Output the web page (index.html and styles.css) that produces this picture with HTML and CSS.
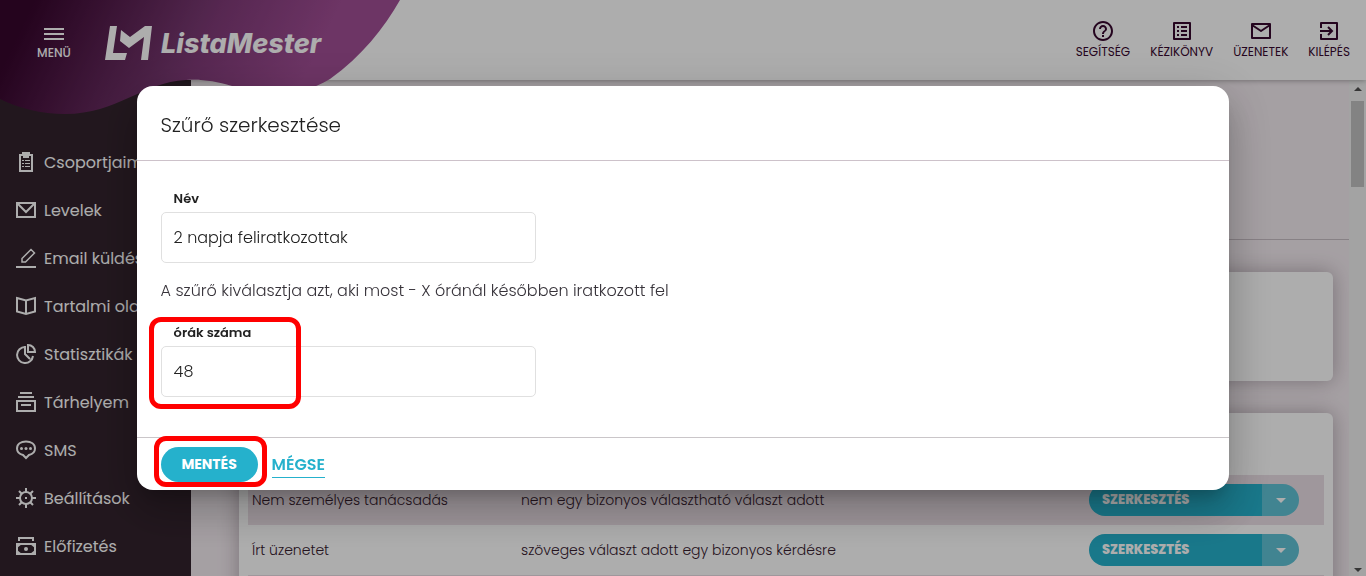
FILE: index.html
```html
<!DOCTYPE html>
<html lang="hu">
<head>
    <meta charset="UTF-8">
    <meta name="viewport" content="width=device-width, initial-scale=1.0">
    <title>ListaMester</title>
    <link rel="stylesheet" href="styles.css">
</head>
<body>
    <div class="app">
        <header class="topbar">
            <!-- Purple wave behind the logo -->
            <svg class="wave" width="400" height="115" viewBox="0 0 400 115" aria-hidden="true">
                <defs>
                    <linearGradient id="waveFill" gradientUnits="userSpaceOnUse" x1="30" y1="10" x2="280" y2="130">
                        <stop offset="0" stop-color="#37062d"/>
                        <stop offset="0.55" stop-color="#773770"/>
                        <stop offset="0.62" stop-color="#803a78"/>
                        <stop offset="1" stop-color="#a14e95"/>
                    </linearGradient>
                </defs>
                <path fill="url(#waveFill)" d="M0 0H400C384 28 362 56 330 79C298 99 262 94 232 86C215 81 202 79 186 80C142 82 118 114 65 114C42 114 18 108 0 99Z"/>
            </svg>
            <div class="brand">
                <button class="menu-button" type="button">
                    <svg width="20" height="14" viewBox="0 0 20 14" aria-hidden="true"><path d="M0 2H20M0 7H20M0 12H20" stroke="currentColor" stroke-width="2"/></svg>
                    <span>MENÜ</span>
                </button>
                <a class="logo" href="#">
                    <svg width="48" height="36" viewBox="0 0 48 36" aria-hidden="true"><path fill="currentColor" d="M5 1H12L8 28H22L20 35H0ZM16 5L25 12L40 1H47L43 35H36L39 12L24 23L15 16Z"/></svg>
                    <span>ListaMester</span>
                </a>
            </div>
            <nav class="tools">
                <a href="#">
                    <svg viewBox="0 0 24 24" width="24" height="24" aria-hidden="true"><path fill="currentColor" d="M11 18h2v-2h-2v2zm1-16C6.480 2 2 6.480 2 12s4.480 10 10 10 10-4.480 10-10S17.520 2 12 2zm0 18c-4.410 0-8-3.590-8-8s3.590-8 8-8 8 3.590 8 8-3.590 8-8 8zm0-14c-2.210 0-4 1.790-4 4h2c0-1.100.9-2 2-2s2 .9 2 2c0 2-3 1.750-3 5h2c0-2.250 3-2.500 3-5 0-2.210-1.790-4-4-4z"/></svg>
                    <span>SEGÍTSÉG</span>
                </a>
                <a href="#">
                    <svg viewBox="0 0 24 24" width="24" height="24" aria-hidden="true"><path fill="none" stroke="currentColor" stroke-width="2" stroke-linejoin="round" d="M4 4H20V20H4Z"/><path stroke="currentColor" stroke-width="2" d="M7 8H9M11 8H17M7 12H9M11 12H17M7 16H9M11 16H17"/></svg>
                    <span>KÉZIKÖNYV</span>
                </a>
                <a href="#">
                    <svg viewBox="0 0 24 24" width="24" height="24" aria-hidden="true"><path fill="none" stroke="currentColor" stroke-width="2" stroke-linejoin="round" d="M3 5H21V19H3ZM3 6L12 12L21 6"/></svg>
                    <span>ÜZENETEK</span>
                </a>
                <a href="#">
                    <svg viewBox="0 0 24 24" width="24" height="24" aria-hidden="true"><path fill="none" stroke="currentColor" stroke-width="2" stroke-linejoin="round" d="M4 9V4H20V20H4V15"/><path fill="none" stroke="currentColor" stroke-width="2" d="M3 12H15M11 8L15 12L11 16"/></svg>
                    <span>KILÉPÉS</span>
                </a>
            </nav>
        </header>

        <div class="columns">
            <nav class="sidebar">
                <a href="#">
                    <svg viewBox="0 0 20 20" width="20" height="20" aria-hidden="true"><path fill="none" stroke="currentColor" stroke-width="2" d="M4 3H16V19H4ZM7 4V1H13V4M7 5H13"/><path stroke="currentColor" d="M6 8.500H8M9 8.500H14M6 11.500H8M9 11.500H14M6 14.500H8M9 14.500H14"/></svg>
                    <span>Csoportjaim</span>
                </a>
                <a href="#">
                    <svg viewBox="0 0 20 20" width="20" height="20" aria-hidden="true"><path fill="none" stroke="currentColor" stroke-width="2" d="M1 3H19V17H1ZM2 4L10 12L18 4"/></svg>
                    <span>Levelek</span>
                </a>
                <a href="#">
                    <svg viewBox="0 0 20 20" width="20" height="20" aria-hidden="true"><path fill="none" stroke="currentColor" stroke-width="2" d="M0 19H20"/><path fill="none" stroke="currentColor" stroke-width="1.500" d="M6 14V10.500L15 1.500L18.500 5L9.500 14Z"/></svg>
                    <span>Email küldés</span>
                </a>
                <a href="#">
                    <svg viewBox="0 0 20 20" width="20" height="20" aria-hidden="true"><path fill="none" stroke="currentColor" stroke-width="2" d="M1 2L10 4.500L19 2V15.500L10 18L1 15.500ZM10 4V18"/></svg>
                    <span>Tartalmi oldalak</span>
                </a>
                <a href="#">
                    <svg viewBox="0 0 20 20" width="20" height="20" aria-hidden="true"><path fill="none" stroke="currentColor" stroke-width="2" d="M9 3A8 8 0 1 0 17 12M9 2V10L14 15M12 1V8H19A7 7 0 0 0 12 1Z"/></svg>
                    <span>Statisztikák</span>
                </a>
                <a href="#">
                    <svg viewBox="0 0 20 20" width="20" height="20" aria-hidden="true"><path fill="none" stroke="currentColor" stroke-width="2" d="M4 1H16M2 5H18M1 9H19V19H1ZM5 13H15"/></svg>
                    <span>Tárhelyem</span>
                </a>
                <a href="#">
                    <svg viewBox="0 0 20 20" width="20" height="20" aria-hidden="true"><path fill="none" stroke="currentColor" stroke-width="2" d="M7 15C3 14 1 12 1 8.500C1 4 5 1.500 10 1.500S19 4 19 8.500C19 12 17 14 13 15L10 18Z"/><g fill="currentColor"><circle cx="5.500" cy="8.500" r="1.500"/><circle cx="10" cy="8.500" r="1.500"/><circle cx="14.500" cy="8.500" r="1.500"/></g></svg>
                    <span>SMS</span>
                </a>
                <a href="#">
                    <svg viewBox="0 0 20 20" width="20" height="20" aria-hidden="true"><circle cx="10" cy="10" r="6" fill="none" stroke="currentColor" stroke-width="2"/><path stroke="currentColor" stroke-width="2" d="M10 0V4M10 16V20M0 10H4M16 10H20M3 3L6 6M14 14L17 17M3 17L6 14M14 6L17 3M9 10H11"/></svg>
                    <span>Beállítások</span>
                </a>
                <a href="#">
                    <svg viewBox="0 0 20 20" width="20" height="20" aria-hidden="true"><path fill="none" stroke="currentColor" stroke-width="2" d="M3 5V2H17V5M1 8H19V18H1Z"/><path fill="currentColor" d="M1 8H6L1 12ZM19 8H14L19 12ZM1 18H6L1 14ZM19 18H14L19 14Z"/><circle cx="10" cy="13" r="2" fill="currentColor"/></svg>
                    <span>Előfizetés</span>
                </a>
            </nav>

            <main class="content">
                <div class="page-head"></div>
                <section class="card card-summary"></section>
                <section class="card card-list">
                    <table class="filters">
                        <tbody>
                            <tr>
                                <td>Nem személyes tanácsadás</td>
                                <td>nem egy bizonyos választható választ adott</td>
                                <td>
                                    <div class="split-button">
                                        <button type="button" class="split-main">SZERKESZTÉS</button>
                                        <button type="button" class="split-more" aria-label="Továbbiak"><span class="caret"></span></button>
                                    </div>
                                </td>
                            </tr>
                            <tr>
                                <td>Írt üzenetet</td>
                                <td>szöveges választ adott egy bizonyos kérdésre</td>
                                <td>
                                    <div class="split-button">
                                        <button type="button" class="split-main">SZERKESZTÉS</button>
                                        <button type="button" class="split-more" aria-label="Továbbiak"><span class="caret"></span></button>
                                    </div>
                                </td>
                            </tr>
                        </tbody>
                    </table>
                </section>
            </main>

            <div class="scrollbar" aria-hidden="true">
                <span class="arrow arrow-up"></span>
                <span class="thumb"></span>
                <span class="arrow arrow-down"></span>
            </div>
        </div>
    </div>

    <div class="overlay">
        <form class="dialog" role="dialog" aria-labelledby="dialog-title">
            <h2 id="dialog-title">Szűrő szerkesztése</h2>
            <div class="dialog-body">
                <div class="field">
                    <label for="name">Név</label>
                    <input type="text" id="name" name="name" value="2 napja feliratkozottak">
                </div>
                <p>A szűrő kiválasztja azt, aki most - X óránál későbben iratkozott fel</p>
                <div class="field marked">
                    <label for="hours">órák száma</label>
                    <input type="text" id="hours" name="hours" value="48">
                </div>
            </div>
            <div class="dialog-actions">
                <span class="marked"><button type="submit" class="save">MENTÉS</button></span>
                <a class="cancel" href="#">MÉGSE</a>
            </div>
        </form>
    </div>
</body>
</html>
```
FILE: styles.css
```css
* {
    box-sizing: border-box;
}

body {
    margin: 0;
    height: 100vh;
    overflow: hidden; /* Only the content column scrolls */
    font-family: Poppins, Inter, "Open Sans", sans-serif;
    font-size: 16px;
    color: #212121;
}

a {
    color: inherit;
    text-decoration: none;
}

button {
    font-family: inherit;
    border: none;
    padding: 0;
    cursor: pointer;
}

svg {
    display: block;
    flex: none;
}

.app {
    display: flex;
    flex-direction: column;
    height: 100vh;
}

/* Top bar */
.topbar {
    position: relative;
    z-index: 1;
    display: flex;
    justify-content: space-between;
    height: 80px;
    flex: none;
    background-color: #fff;
    box-shadow: 0 0 6px rgba(0, 0, 0, 0.4);
}

.wave {
    position: absolute;
    top: 0;
    left: 0;
}

.brand {
    position: relative;
    display: flex;
    align-items: center;
    gap: 34px;
    padding: 6px 0 0 37px;
    color: #fff;
}

.menu-button {
    display: flex;
    flex-direction: column;
    align-items: center;
    gap: 4px;
    width: 34px;
    padding-top: 2px;
    background: none;
    color: inherit;
    font-size: 12px;
    line-height: 16px;
    font-weight: 500;
}

.logo {
    display: flex;
    align-items: center;
    gap: 8px;
    font-family: Inter, sans-serif;
    font-size: 27px;
    font-weight: 800;
    font-style: italic;
}

.tools {
    display: flex;
    gap: 20px;
    padding: 19px 16px 0 0;
    color: #37082f;
    font-size: 12px;
    line-height: 18px;
    font-weight: 400;
}

.tools a {
    display: flex;
    flex-direction: column;
    align-items: center;
}

/* Sidebar */
.columns {
    display: flex;
    flex: 1;
    min-height: 0;
}

.sidebar {
    display: flex;
    flex-direction: column;
    gap: 22px;
    width: 191px;
    flex: none;
    padding: 70px 0 0 16px;
    overflow: hidden;
    background-color: #33232d;
    color: #fff;
    font-size: 16px;
    line-height: 26px;
}

.sidebar a {
    display: flex;
    align-items: flex-start;
    gap: 8px;
    white-space: nowrap;
}

.sidebar svg {
    margin-top: 2px;
}

/* Content */
.content {
    flex: 1;
    min-width: 0;
    overflow: hidden;
    background-color: #f4ecf1;
}

.page-head {
    height: 160px;
    border-bottom: 1px solid #c8bec5;
}

.card {
    margin: 32px 16px 0 48px;
    border-radius: 6px;
    background-color: #fff;
    box-shadow: 0 0 20px rgba(55, 35, 50, 0.35);
}

.card-summary {
    height: 109px;
}

.card-list {
    padding: 62px 9px 0;
    height: 400px;
}

.filters {
    width: 100%;
    border-spacing: 0;
    color: #37202f;
    font-size: 14px;
    font-weight: 300;
}

.filters tr:nth-child(odd) {
    background-color: #ebdfe6;
}

.filters td {
    height: 50px;
    padding: 0 4px;
}

.filters tr:nth-child(even) td {
    height: 51px;
    border-bottom: 1px solid #ebdfe6;
}

.filters td:first-child {
    width: 25%;
}

.filters td:last-child {
    width: 239px;
}

.split-button {
    display: flex;
    width: 210px;
    height: 32px;
    border-radius: 16px;
    overflow: hidden;
}

.split-main {
    flex: 1;
    padding-left: 13px;
    background-color: #25b1cc;
    color: #fff;
    font-size: 13px;
    font-weight: 800;
    text-align: left;
}

.split-more {
    display: flex;
    align-items: center;
    justify-content: center;
    width: 37px;
    background-color: #61c3d6;
}

.caret {
    border: 5px solid transparent;
    border-top-color: #fff;
    border-bottom: none;
}

/* Scrollbar column */
.scrollbar {
    display: flex;
    flex-direction: column;
    align-items: center;
    width: 17px;
    padding: 7px 0 4px;
    background-color: #f1f1f1;
}

.thumb {
    width: 13px;
    height: 86px;
    margin: 10px 0 auto;
    background-color: #c1c1c1;
}

.arrow {
    border: 4px solid transparent;
}

.arrow-up {
    border-top: none;
    border-bottom-color: #505050;
}

.arrow-down {
    border-bottom: none;
    border-top-color: #505050;
}

/* Dialog */
.overlay {
    position: fixed;
    inset: 0;
    z-index: 2;
    display: flex;
    align-items: center;
    justify-content: center;
    background-color: rgba(0, 0, 0, 0.32);
}

.dialog {
    width: 80%;
    border-radius: 16px;
    background-color: #fff;
    box-shadow: 0 11px 15px -7px rgba(0, 0, 0, 0.2), 0 24px 38px 3px rgba(0, 0, 0, 0.14), 0 9px 46px 8px rgba(0, 0, 0, 0.12);
}

.dialog h2 {
    margin: 0;
    padding: 24px 24px 20px;
    border-bottom: 1px solid #cdc2ca;
    font-size: 20px;
    line-height: 30px;
    font-weight: 300;
}

.dialog-body {
    padding: 24px 24px 40px;
}

.dialog-body p {
    margin: 16px 0;
    line-height: 24px;
    font-weight: 300;
    color: #37333a;
}

.field {
    width: 375px;
}

.field label {
    display: block;
    padding-left: 13px;
    font-size: 13px;
    line-height: 27px;
    font-weight: 600;
}

.field input {
    display: block;
    width: 100%;
    height: 51px;
    padding: 0 12px;
    border: 1px solid #e0e0e0;
    border-radius: 5px;
    background: #fff;
    color: #212121;
    font-family: inherit;
    font-size: 16px;
    font-weight: 300;
}

.dialog-actions {
    display: flex;
    align-items: center;
    gap: 14px;
    padding: 9px 24px 8px;
    border-top: 1px solid #cac6c9;
}

.save {
    display: block;
    width: 97px;
    height: 35px;
    border-radius: 18px;
    background-color: #25b1cc;
    color: #fff;
    font-size: 14px;
    font-weight: 700;
}

.cancel {
    border-bottom: 1px solid #25b1cc;
    color: #25b1cc;
    font-size: 16px;
    line-height: 25px;
    font-weight: 600;
}

/* Red frames around the highlighted controls */
.marked {
    position: relative;
}

.marked::after {
    content: "";
    position: absolute;
    inset: -11px -9px -5px -7px;
    border: 5px solid #f00;
    border-radius: 12px;
    pointer-events: none;
}

.field.marked::after {
    inset: -2px 235px -12px -12px;
}
```
